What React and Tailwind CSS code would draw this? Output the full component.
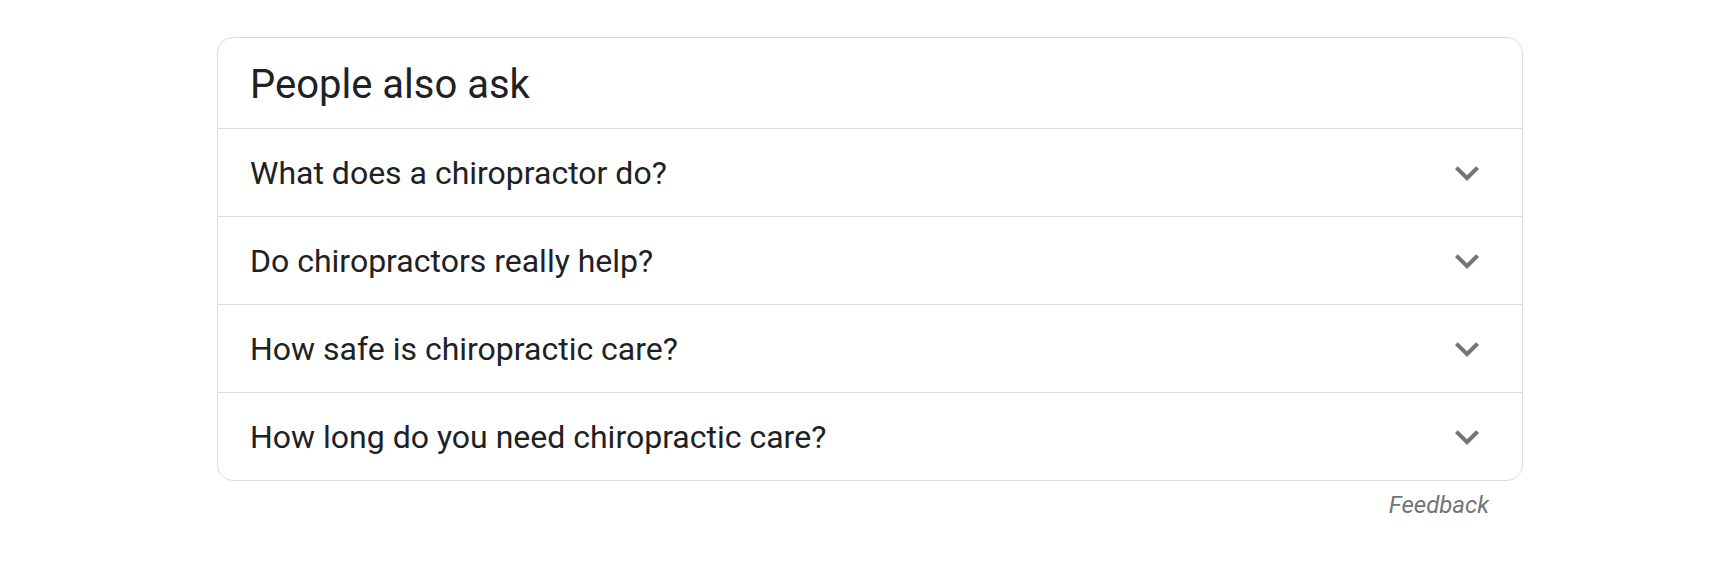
import { useState } from 'react';

const QUESTIONS = [
  'What does a chiropractor do?',
  'Do chiropractors really help?',
  'How safe is chiropractic care?',
  'How long do you need chiropractic care?',
];

function Chevron() {
  return (
    <svg width="48" height="48" viewBox="0 0 24 24" className="shrink-0 fill-[#70757a]">
      <path d="M16.59 8.59L12 13.17 7.41 8.59 6 10l6 6 6-6z" />
    </svg>
  );
}

export default function App() {
  const [open, setOpen] = useState(null);

  return (
    <div className="min-h-[570px] bg-white pt-[37px] pl-[217px] font-['Roboto','Liberation_Sans',sans-serif] text-[#202124]">
      <div className="w-[1306px]">
        <div className="border border-[#dadce0] rounded-[16px] overflow-hidden">
          {/* Header */}
          <div className="h-[90px] flex items-center px-[32px] pt-[3px]">
            <h2 className="text-[40px] leading-normal font-normal">People also ask</h2>
          </div>

          {QUESTIONS.map((q, i) => (
            <button
              key={q}
              onClick={() => setOpen(open === i ? null : i)}
              className="w-full h-[88px] flex items-center justify-between border-t border-[#dadce0] pl-[32px] pr-[31px] text-left"
            >
              <span className="text-[32px] leading-normal">{q}</span>
              <Chevron />
            </button>
          ))}
        </div>

        <div className="flex justify-end pr-[34px] mt-[10px]">
          <span className="text-[24px] leading-[28px] italic text-[#70757a]">Feedback</span>
        </div>
      </div>
    </div>
  );
}
